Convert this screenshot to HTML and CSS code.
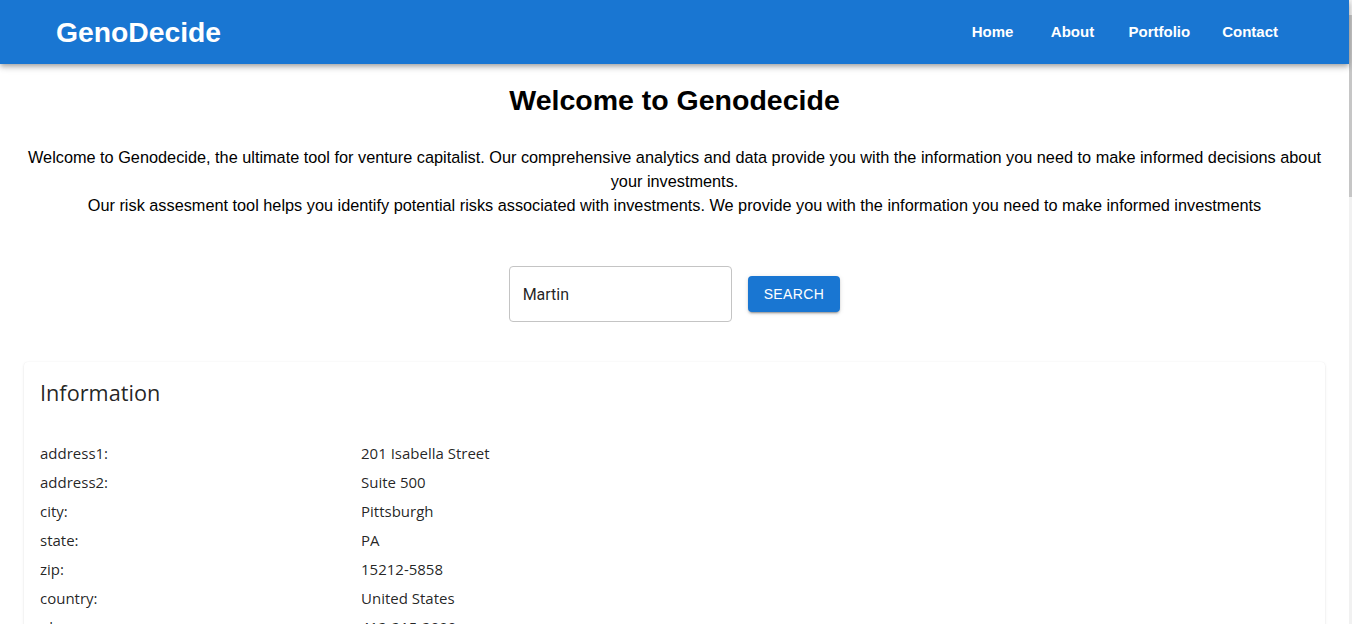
FILE: index.html
```html
<!DOCTYPE html>
<html lang="en">
<head>
<meta charset="utf-8">
<title>GenoDecide</title>
<link rel="stylesheet" href="styles.css">
</head>
<body>
<div class="page">
  <header class="appbar">
    <div class="brand">GenoDecide</div>
    <nav class="nav">
      <a class="nav-link" href="#">Home</a>
      <a class="nav-link" href="#">About</a>
      <a class="nav-link" href="#">Portfolio</a>
      <a class="nav-link" href="#">Contact</a>
    </nav>
  </header>
  <main class="main">
    <h1 class="title">Welcome to Genodecide</h1>
    <p class="intro">Welcome to Genodecide, the ultimate tool for venture capitalist. Our comprehensive analytics and data provide you with the information you need to make informed decisions about your investments.<br>Our risk assesment tool helps you identify potential risks associated with investments. We provide you with the information you need to make informed investments</p>
    <div class="search">
      <div class="field"><input class="field-input" type="text" value="Martin"></div>
      <button class="btn" type="button">Search</button>
    </div>
    <section class="card">
      <h2 class="card-title">Information</h2>
      <div class="info">
        <div class="label">address1:</div><div class="value">201 Isabella Street</div>
        <div class="label">address2:</div><div class="value">Suite 500</div>
        <div class="label">city:</div><div class="value">Pittsburgh</div>
        <div class="label">state:</div><div class="value">PA</div>
        <div class="label">zip:</div><div class="value">15212-5858</div>
        <div class="label">country:</div><div class="value">United States</div>
        <div class="label">phone:</div><div class="value">412-215-2000</div>
        <div class="label">website:</div><div class="value">www.example.com</div>
      </div>
    </section>
  </main>
</div>
<div class="scrollbar"><div class="thumb"></div></div>
</body>
</html>
```
FILE: styles.css
```css
html, body {
  margin: 0;
  padding: 0;
  background: #fff;
}
body {
  display: flex;
  font-family: "Liberation Sans", Arial, sans-serif;
  color: #000;
}
.page {
  flex: 1;
  min-width: 0;
}
.scrollbar {
  width: 3px;
  background: #f1f1f1;
  flex: none;
}
.thumb {
  margin-top: 15px;
  height: 182px;
  background: #c6c6c6;
}
.appbar {
  height: 64px;
  background: #1976d2;
  color: #fff;
  display: flex;
  align-items: center;
  justify-content: space-between;
  padding: 0 55px 0 56px;
  box-shadow: 0px 2px 4px -1px rgba(0,0,0,0.2), 0px 4px 5px 0px rgba(0,0,0,0.14), 0px 1px 10px 0px rgba(0,0,0,0.12);
  position: relative;
  z-index: 1;
}
.brand {
  font-size: 28.3px;
  font-weight: 700;
  line-height: 1;
}
.nav {
  display: flex;
  align-items: center;
}
.nav-link {
  color: #fff;
  text-decoration: none;
  font-size: 15px;
  font-weight: 700;
  min-width: 64px;
  padding: 6px 8px;
  box-sizing: border-box;
  text-align: center;
  margin: 0 8px;
  line-height: 20px;
}
.title {
  margin: 0;
  padding-top: 20px;
  text-align: center;
  font-size: 28.5px;
  font-weight: 700;
  line-height: 32px;
}
.intro {
  margin: 29px 16px 0;
  text-align: center;
  font-size: 16.3px;
  line-height: 24px;
}
.search {
  display: flex;
  justify-content: center;
  align-items: center;
  gap: 16px;
  margin-top: 49px;
}
.field {
  width: 223px;
  height: 56px;
  box-sizing: border-box;
  border: 1px solid #c4c4c4;
  border-radius: 4px;
  display: flex;
  align-items: center;
}
.field-input {
  border: 0;
  outline: none;
  background: transparent;
  width: 100%;
  padding: 0 13px;
  font-family: Roboto, "Liberation Sans", sans-serif;
  font-size: 16px;
  color: rgba(0,0,0,0.87);
}
.btn {
  height: 36px;
  padding: 6px 16px;
  border: 0;
  border-radius: 4px;
  background: #1976d2;
  color: #fff;
  font-family: "Liberation Sans", Arial, sans-serif;
  font-size: 14px;
  font-weight: 400;
  letter-spacing: 0.4px;
  text-transform: uppercase;
  box-shadow: 0px 3px 1px -2px rgba(0,0,0,0.2), 0px 2px 2px 0px rgba(0,0,0,0.14), 0px 1px 5px 0px rgba(0,0,0,0.12);
  min-width: 92px;
}
.card {
  margin: 40px 24px 0;
  background: #fff;
  border-radius: 4px;
  padding: 15px 16px 16px;
  box-shadow: 0px 1px 3px 0px rgba(0,0,0,0.10), 0px 0px 1px 0px rgba(0,0,0,0.08);
  font-family: "Open Sans", "Noto Sans", sans-serif;
  color: rgba(0,0,0,0.87);
}
.card-title {
  margin: 0 0 30px;
  font-size: 21.7px;
  font-weight: 400;
  line-height: 32px;
}
.info {
  display: grid;
  grid-template-columns: 321px 1fr;
}
.label, .value {
  font-size: 15px;
  line-height: 29px;
}
```
